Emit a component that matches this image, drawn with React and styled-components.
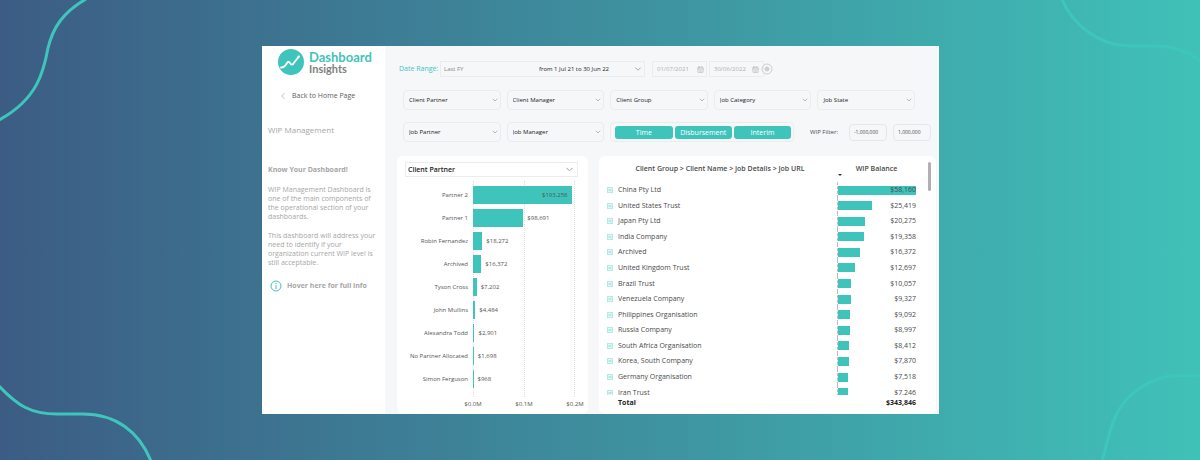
import styled, { createGlobalStyle } from 'styled-components';
import { ChevronDown, ChevronLeft, CalendarDays } from 'lucide-react';

const partners = [
	{ name: 'Partner 2', value: 193258 },
	{ name: 'Partner 1', value: 98691 },
	{ name: 'Robin Fernandez', value: 18272 },
	{ name: 'Archived', value: 16372 },
	{ name: 'Tyson Cross', value: 7202 },
	{ name: 'John Mullins', value: 4484 },
	{ name: 'Alexandra Todd', value: 2901 },
	{ name: 'No Partner Allocated', value: 1698 },
	{ name: 'Simon Ferguson', value: 968 },
];

const groups = [
	{ name: 'China Pty Ltd', value: 58160 },
	{ name: 'United States Trust', value: 25419 },
	{ name: 'Japan Pty Ltd', value: 20275 },
	{ name: 'India Company', value: 19358 },
	{ name: 'Archived', value: 16372 },
	{ name: 'United Kingdom Trust', value: 12697 },
	{ name: 'Brazil Trust', value: 10057 },
	{ name: 'Venezuela Company', value: 9327 },
	{ name: 'Philippines Organisation', value: 9092 },
	{ name: 'Russia Company', value: 8997 },
	{ name: 'South Africa Organisation', value: 8412 },
	{ name: 'Korea, South Company', value: 7870 },
	{ name: 'Germany Organisation', value: 7518 },
	{ name: 'Iran Trust', value: 7246 },
];

const CHART_MAX = 200000;
const money = (value) => `$${value.toLocaleString('en-US')}`;

const Filter = ({ label }) => (
	<Field>
		<Select aria-label={label} defaultValue={label}>
			<option>{label}</option>
		</Select>
		<Chevron size={8} strokeWidth={2} />
	</Field>
);

const Sidebar = () => (
	<Aside>
		<Brand>
			<svg width="26" height="26" viewBox="0 0 26 26" aria-hidden="true">
				<circle cx="13" cy="13" r="13" fill="#3fc4bb" />
				<path d="M3 18.5C6 18.5 7.5 17 9 14C9.8 12.3 11 12.3 12 14C13.2 16.4 14.8 16 16 13.8L20.5 8" fill="none" stroke="#fff" strokeWidth="1.8" strokeLinecap="round" />
				<circle cx="20.8" cy="7.6" r="1.2" fill="#fff" />
			</svg>
			<BrandName>
				Dashboard
				<small>Insights</small>
			</BrandName>
		</Brand>
		<BackLink href="#home">
			<ChevronLeft size={10} strokeWidth={2} color="#b5b5b5" />
			Back to Home Page
		</BackLink>
		<SectionTitle>WIP Management</SectionTitle>
		<Know>Know Your Dashboard!</Know>
		<Note>WIP Management Dashboard is one of the main components of the operational section of your dashboards.</Note>
		<Note>This dashboard will address your need to identify if your organization current WIP level is still acceptable.</Note>
		<InfoButton type="button">
			<svg width="12" height="12" viewBox="0 0 12 12" fill="none" stroke="#3fc4bb" aria-hidden="true">
				<circle cx="6" cy="6" r="5" />
				<path d="M6 5.2V9M6 3V4.2" />
			</svg>
			Hover here for full info
		</InfoButton>
	</Aside>
);

const PartnerChart = () => (
	<Card>
		<CardField>
			<Select aria-label="Chart by" defaultValue="Client Partner">
				<option>Client Partner</option>
			</Select>
			<Chevron size={11} strokeWidth={2} />
		</CardField>
		<Chart>
			<Labels>
				{partners.map((p) => <span key={p.name}>{p.name}</span>)}
			</Labels>
			<Plot>
				<GridLines><i /><i /></GridLines>
				<Bars>
					{partners.map((p) => (
						<BarRow key={p.name}>
							<Bar style={{ width: `${(p.value / CHART_MAX) * 100}%` }}>
								{p.value > 150000 && <span>{money(p.value)}</span>}
							</Bar>
							{p.value <= 150000 && money(p.value)}
						</BarRow>
					))}
				</Bars>
			</Plot>
			<Axis>
				<span>$0.0M</span>
				<span>$0.1M</span>
				<span>$0.2M</span>
			</Axis>
		</Chart>
	</Card>
);

const BalanceTable = () => (
	<Card>
		<Table>
			<thead>
				<Row>
					<th>Client Group &gt; Client Name &gt; Job Details &gt; Job URL</th>
					<th>WIP Balance</th>
				</Row>
			</thead>
			<Body>
				{groups.map((g) => (
					<Row key={g.name}>
						<NameCell>
							<Expand type="button" aria-label={`Expand ${g.name}`}>
								<svg width="6" height="6" viewBox="0 0 6 6" fill="#e6f8f6" stroke="#b4e9e5" aria-hidden="true">
									<rect x="0.5" y="0.5" width="5" height="5" />
									<path d="M1.5 3H4.5" stroke="#7ad8d1" />
								</svg>
							</Expand>
							{g.name}
						</NameCell>
						<BalanceCell>
							<BalanceBar style={{ width: `${(g.value / groups[0].value) * 100}%` }} />
							<span>{money(g.value)}</span>
						</BalanceCell>
					</Row>
				))}
			</Body>
			<tfoot>
				<Row>
					<TotalName>Total</TotalName>
					<TotalValue>$343,846</TotalValue>
				</Row>
			</tfoot>
		</Table>
		<SortArrow />
		<Thumb />
	</Card>
);

export default function App() {
	return (
		<Page>
			<GlobalStyle />
			<Corner $top $left width="90" height="122" viewBox="0 0 90 122">
				<path d="M86 -1C62 13 53 28 48 48C44 70 38 99 -1 120" />
			</Corner>
			<Corner $left width="154" height="78" viewBox="0 0 154 78">
				<path d="M-1 4C18 24 31 32 57 32L80 32C116 31 139 50 151 79" />
			</Corner>
			<Corner $top width="140" height="64" viewBox="0 0 140 64">
				<path d="M2 -1C12 24 38 45 68 46L98 46C113 46 127 51 141 61" />
			</Corner>
			<Corner width="102" height="90" viewBox="0 0 102 90">
				<path d="M4 91C11 68 13 43 33 25C56 5 74 4 103 6" />
			</Corner>
			<Window>
				<Sidebar />
				<Main>
					<DateRow>
						<DateLabel htmlFor="range">Date Range:</DateLabel>
						<RangeField>
							<Select id="range" defaultValue="Last FY">
								<option>Last FY</option>
							</Select>
							<span>from 1 Jul 21 to 30 Jun 22</span>
							<Chevron size={10} strokeWidth={2} />
						</RangeField>
						<DateField>
							<input aria-label="From" defaultValue="01/07/2021" />
							<CalendarDays size={7} />
						</DateField>
						<DateField>
							<input aria-label="To" defaultValue="30/06/2022" />
							<CalendarDays size={7} />
						</DateField>
						<svg width="12" height="12" viewBox="0 0 12 12" fill="none" stroke="#cfcfcf" aria-hidden="true">
							<circle cx="6" cy="6" r="5" />
							<circle cx="6" cy="6" r="2" fill="#cfcfcf" />
						</svg>
					</DateRow>
					<Filters>
						<Filter label="Client Partner" />
						<Filter label="Client Manager" />
						<Filter label="Client Group" />
						<Filter label="Job Category" />
						<Filter label="Job State" />
						<Filter label="Job Partner" />
						<Filter label="Job Manager" />
						<WipRow>
							<Toggles>
								<Toggle type="button">Time</Toggle>
								<Toggle type="button">Disbursement</Toggle>
								<Toggle type="button">Interim</Toggle>
							</Toggles>
							<label htmlFor="wipMin">WIP Filter:</label>
							<Limit id="wipMin" defaultValue="-1,000,000" />
							<Limit aria-label="WIP maximum" defaultValue="1,000,000" />
						</WipRow>
					</Filters>
					<Cards>
						<PartnerChart />
						<BalanceTable />
					</Cards>
				</Main>
			</Window>
		</Page>
	);
}

const GlobalStyle = createGlobalStyle`
	* {
		box-sizing: border-box;
	}
	body {
		margin: 0;
		font: 7px/10px 'Open Sans', 'Noto Sans', sans-serif;
		color: #4a4a4a;
	}
	button, input, select {
		font: inherit;
		color: inherit;
		border: 0;
		padding: 0;
		margin: 0;
		background: none;
	}
	svg {
		flex: none;
	}
`;

const Page = styled.div`
	position: relative;
	display: flex;
	height: 100vh;
	padding: 46px 261px 46px 262px;
	overflow: hidden;
	background: linear-gradient(to right, #3c5c84, #40c1b8);
`;

const Corner = styled.svg`
	position: absolute;
	${({ $top }) => ($top ? 'top: 0;' : 'bottom: 0;')}
	${({ $left }) => ($left ? 'left: 0;' : 'right: 0;')}
	fill: none;
	stroke: #3fc6bc;
	stroke-width: 3;
`;

const Window = styled.div`
	flex: 1;
	display: flex;
	min-width: 0;
	background: #f6f7f9;
`;

const Aside = styled.aside`
	width: 123px;
	padding: 3px 6px 0;
	display: flex;
	flex-direction: column;
	align-items: flex-start;
	background: #fff;
	color: #a6a6a6;
`;

const Brand = styled.div`
	display: flex;
	gap: 5px;
	height: 26px;
	padding-left: 10px;
`;

const BrandName = styled.div`
	padding-top: 2px;
	font: 700 13px/13px Lato, sans-serif;
	color: #3fc4bb;

	small {
		display: block;
		font-size: 11px;
		line-height: 10px;
		color: #808080;
	}
`;

const BackLink = styled.a`
	display: flex;
	align-items: center;
	gap: 4px;
	margin: 16px 0 0 10px;
	color: #5c5c5c;
	text-decoration: none;
`;

const SectionTitle = styled.h1`
	margin: 23px 0 0;
	font-size: 8px;
	line-height: 12px;
	font-weight: 400;
`;

const Know = styled.h2`
	margin: 29px 0 5px;
	font-size: 7px;
	line-height: 10px;
	font-weight: 700;
`;

const Note = styled.p`
	margin: 5px 0;
	line-height: 9px;
`;

const InfoButton = styled.button`
	display: flex;
	align-items: center;
	gap: 5px;
	margin-top: 8px;
	padding-left: 2px;
	font-weight: 700;
`;

const Main = styled.main`
	flex: 1;
	min-width: 0;
	display: flex;
	flex-direction: column;
	padding: 15px 3px 0 12px;
`;

const DateRow = styled.div`
	display: flex;
	align-items: center;
	height: 16px;
	padding-left: 2px;
`;

const DateLabel = styled.label`
	width: 41px;
	color: #3fc4bb;
`;

const Field = styled.div`
	display: flex;
	align-items: center;
	height: 20px;
	padding: 0 1px 0 5px;
	border: 1px solid #ebecee;
	border-radius: 4px;
	color: #222;
	font-size: 6px;
`;

const Select = styled.select`
	flex: 1;
	min-width: 0;
	appearance: none;
	outline: none;
`;

const Chevron = styled(ChevronDown)`
	color: #999;
`;

const RangeField = styled(Field)`
	width: 205px;
	height: 16px;
	padding: 0 1px 0 3px;
	margin-right: 7px;
	border-radius: 0;

	select {
		color: #888;
	}
	span {
		margin-right: 24px;
	}
`;

const DateField = styled(Field)`
	width: 55px;
	height: 16px;
	padding: 0 2px 0 4px;
	border-radius: 0;
	color: #b0b0b0;

	& + & {
		margin: 0 -3px 0 2px;
		padding-right: 4px;
	}
	input {
		flex: 1;
		min-width: 0;
	}
`;

const Filters = styled.div`
	display: grid;
	grid-template-columns: repeat(5, 1fr);
	gap: 12px 6px;
	margin: 13px 21px 14px 6px;
`;

const WipRow = styled.div`
	grid-column: 3 / -1;
	display: flex;
	align-items: center;
	gap: 6px;
	margin-right: -16px;

	label {
		margin-left: auto;
		padding-right: 5px;
		font-size: 6px;
	}
`;

const Toggles = styled.div`
	display: grid;
	grid-template-columns: repeat(3, 1fr);
	gap: 2px;
	width: 184px;
	padding: 3px 2px 2px 4px;
	border: 1px solid #ebecee;
	border-radius: 4px;
`;

const Toggle = styled.button`
	height: 13px;
	border-radius: 3px;
	background: #3fc4bb;
	color: #fff;
`;

const Limit = styled.input`
	width: 38px;
	height: 17px;
	padding-left: 4px;
	border: 1px solid #e6e7e9;
	border-radius: 4px;
	font-size: 5px;
`;

const Cards = styled.div`
	flex: 1;
	min-height: 0;
	display: grid;
	grid-template: minmax(0, 1fr) / 191fr 337fr;
	gap: 11px;
`;

const Card = styled.section`
	position: relative;
	display: flex;
	flex-direction: column;
	min-width: 0;
	border-radius: 6px;
	background: #fff;
`;

const CardField = styled(Field)`
	height: 15px;
	margin: 6px 10px 0 8px;
	padding: 0 2px;
	border-radius: 0;
	font-size: 7px;
	font-weight: 600;
`;

const Chart = styled.div`
	flex: 1;
	display: grid;
	grid-template-columns: 63px 1fr;
	grid-template-rows: 1fr 17px;
	column-gap: 5px;
	padding: 4px 13px 0 8px;
	color: #555;
	font-size: 6px;
`;

const Labels = styled.div`
	display: flex;
	flex-direction: column;
	padding: 2px 0 7px;
	white-space: nowrap;

	span {
		flex: 1;
		display: flex;
		align-items: center;
		justify-content: flex-end;
	}
`;

const Plot = styled.div`
	display: grid;

	& > * {
		grid-area: 1 / 1;
	}
`;

const GridLines = styled.div`
	display: grid;
	grid-template-columns: 1fr 1fr;
	border-right: 1px dotted #ddd;

	i {
		border-left: 1px dotted #ddd;
	}
`;

const Bars = styled.div`
	display: flex;
	flex-direction: column;
	padding: 2px 0 7px;
`;

const BarRow = styled.div`
	flex: 1;
	display: flex;
	align-items: center;
	gap: 4px;
`;

const Bar = styled.div`
	height: 18px;
	line-height: 18px;
	text-align: right;
	background: #3fc4bb;

	span {
		padding-right: 4px;
	}
`;

const Axis = styled.div`
	grid-column: 2;
	display: flex;
	align-items: center;
	justify-content: space-between;
	margin: 0 -10px;
	padding-bottom: 4px;

	span {
		width: 20px;
		text-align: center;
	}
`;

const Table = styled.table`
	flex: 1;
	min-height: 0;
	display: flex;
	flex-direction: column;
	padding: 0 20px 3px 8px;

	thead {
		height: 26px;
	}
	th {
		line-height: 26px;
		font-weight: 600;
		padding: 0;
	}
	th:first-child {
		padding-right: 4px;
	}
	tfoot {
		height: 16px;
	}
`;

const Body = styled.tbody`
	flex: 1;
	min-height: 0;
	display: grid;
	grid-template-rows: repeat(13, minmax(0, 3fr)) minmax(0, 2fr);
	overflow: hidden;
`;

const Row = styled.tr`
	display: grid;
	grid-template-columns: 1fr 79px;
	align-items: start;
`;

const NameCell = styled.td`
	display: flex;
	align-items: center;
	gap: 5px;
	height: 16px;
	padding: 0;
`;

const Expand = styled.button`
	display: flex;
`;

const BalanceCell = styled.td`
	display: grid;
	align-items: center;
	height: 16px;
	padding: 0;
	border-left: 1px dashed #bbb;

	& > * {
		grid-area: 1 / 1;
	}
	span {
		text-align: right;
	}
`;

const BalanceBar = styled.div`
	height: 9px;
	background: #3fc4bb;
`;

const TotalName = styled.td`
	padding: 0 0 0 11px;
	line-height: 16px;
	font-weight: 700;
	color: #222;
`;

const TotalValue = styled(TotalName)`
	padding: 0;
	text-align: right;
`;

const SortArrow = styled.i`
	position: absolute;
	top: 18px;
	right: 94px;
	border: 2px solid transparent;
	border-top-color: #333;
`;

const Thumb = styled.i`
	position: absolute;
	top: 6px;
	right: 5px;
	width: 3px;
	height: 29px;
	border-radius: 2px;
	background: #b0b0b0;
`;
